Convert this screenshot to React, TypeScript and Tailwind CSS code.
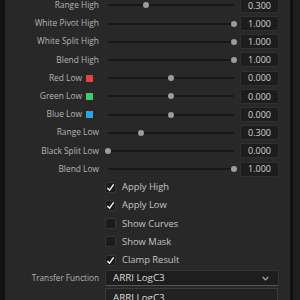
const sliders = [
  { label: "Range High", pos: 0.3, value: "0.300" },
  { label: "White Pivot High", pos: 1, value: "1.000" },
  { label: "White Split High", pos: 1, value: "1.000" },
  { label: "Blend High", pos: 1, value: "1.000" },
  { label: "Red Low", pos: 0.5, value: "0.000", swatch: "bg-[#f03c3c]" },
  { label: "Green Low", pos: 0.5, value: "0.000", swatch: "bg-[#2fd36a]" },
  { label: "Blue Low", pos: 0.5, value: "0.000", swatch: "bg-[#1ea8f0]" },
  { label: "Range Low", pos: 0.26, value: "0.300" },
  { label: "Black Split Low", pos: 0, value: "0.000" },
  { label: "Blend Low", pos: 1, value: "1.000" },
];

const checks = [
  { label: "Apply High", on: true },
  { label: "Apply Low", on: true },
  { label: "Show Curves", on: false },
  { label: "Show Mask", on: false },
  { label: "Clamp Result", on: true },
];

const font = { fontFamily: '"Open Sans", "Noto Sans", sans-serif' };

export default function App() {
  return (
    <div className="w-[300px] h-[300px] overflow-hidden flex bg-[#1e1e1e]" style={font}>
      {/* left edge */}
      <div className="w-[5px] bg-[#121212]" />
      {/* panel */}
      <div className="w-[285px] bg-[#282828] flex flex-col pr-[11px]">
        <div className="-mt-[3.7px]">
          {sliders.map((s) => (
            <div key={s.label} className="h-[18.2px] flex items-center">
              <div className="w-[94px] flex items-center justify-end gap-[4px] text-[8.4px] text-[#b4b4b4] whitespace-nowrap">
                <span>{s.label}</span>
                {s.swatch && <span className={`w-[7px] h-[7px] ${s.swatch}`} />}
                {s.swatch && <span className="w-[2px]" />}
              </div>
              <div className="ml-[9px] w-[126px] h-[2px] bg-[#181818] relative">
                <div
                  className="absolute top-1/2 w-[6px] h-[6px] rounded-full bg-[#9c9c9c] -translate-x-1/2 -translate-y-1/2"
                  style={{ left: `${s.pos * 100}%` }}
                />
              </div>
              <div className="ml-[6px] w-[39px] h-[15px] bg-[#1d1d1d] border border-[#303030] rounded-[2px] flex items-center justify-center text-[9px] text-[#d4d4d4]">
                {s.value}
              </div>
            </div>
          ))}
          {checks.map((c) => (
            <div key={c.label} className="h-[18.2px] flex items-center pl-[100px]">
              <div className="w-[11px] h-[11px] bg-[#1b1b1b] border border-[#363636] rounded-[2px] flex items-center justify-center">
                {c.on && (
                  <svg width="9" height="9" viewBox="0 0 10 10">
                    <path d="M1.5 5.5 L4 8 L8.5 1.5" fill="none" stroke="#f2f2f2" strokeWidth="1.6" />
                  </svg>
                )}
              </div>
              <span className="ml-[6px] text-[9.4px] text-[#c4c4c4]">{c.label}</span>
            </div>
          ))}
          <div className="h-[18.2px] flex items-center">
            <div className="w-[94px] text-right text-[8.2px] text-[#b4b4b4] whitespace-nowrap">Transfer Function</div>
            <div className="ml-[6px] w-[174px] h-[16px] bg-[#1e1e1e] border border-[#333] border-b-[#555] border-b-dotted rounded-t-[2px] flex items-center justify-between pl-[7px] pr-[9px]">
              <span className="text-[9.8px] text-[#dcdcdc]">ARRI LogC3</span>
              <svg width="7" height="5" viewBox="0 0 7 5">
                <path d="M0.8 1 L3.5 3.8 L6.2 1" fill="none" stroke="#a8a8a8" strokeWidth="1.2" />
              </svg>
            </div>
          </div>
          <div className="flex pl-[100px] mt-[1px]">
            <div className="w-[173px] h-[20px] bg-[#222] border border-[#3a3a3a] flex items-center pl-[7px] text-[9.8px] text-[#dcdcdc]">
              ARRI LogC3
            </div>
          </div>
        </div>
      </div>
      {/* right edge */}
      <div className="w-[3px] bg-[#101010]" />
      <div className="flex-1 bg-[#1e1e1e]" />
    </div>
  );
}
